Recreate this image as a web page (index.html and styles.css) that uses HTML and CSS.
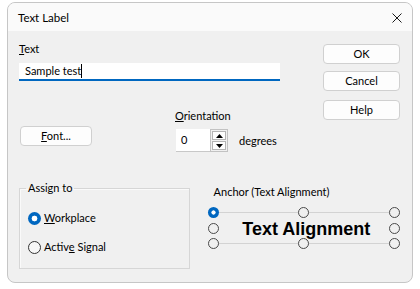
FILE: index.html
```html
<!DOCTYPE html>
<html lang="en">
<head>
  <meta charset="UTF-8" />
  <title>Text Label</title>
  <link rel="stylesheet" href="styles.css">
</head>
<body>
  <div class="window">
    <div class="titlebar">
      <span class="title">Text Label</span>
      <svg class="close" width="10" height="10" viewBox="0 0 10 10">
        <path d="M0.5 0.5 L9.5 9.5 M9.5 0.5 L0.5 9.5" stroke="#1a1a1a" stroke-width="1" fill="none"/>
      </svg>
    </div>

    <div class="body">
      <div class="top">
        <div class="left">
          <div class="field-label"><u>T</u>ext</div>
          <div class="text-input">Sample test<span class="caret"></span></div>

          <div class="row2">
            <button class="btn btn-font"><u>F</u>ont...</button>
            <div class="orient">
              <div class="field-label"><u>O</u>rientation</div>
              <div class="spin-row">
                <div class="spin-input">0</div>
                <div class="spinner">
                  <div class="spin-btn">
                    <svg width="7" height="4" viewBox="0 0 7 4"><polygon points="3.5,0 7,4 0,4" fill="#000"/></svg>
                  </div>
                  <div class="spin-btn">
                    <svg width="7" height="4" viewBox="0 0 7 4"><polygon points="0,0 7,0 3.5,4" fill="#000"/></svg>
                  </div>
                </div>
                <span class="unit">degrees</span>
              </div>
            </div>
          </div>
        </div>

        <div class="right">
          <button class="btn btn-ok">OK</button>
          <button class="btn btn-cancel">Cancel</button>
          <button class="btn btn-help">Help</button>
        </div>
      </div>

      <div class="bottom">
        <fieldset class="group">
          <legend>Assign to</legend>
          <div class="radio-row first">
            <span class="radio checked"></span>
            <span><u>W</u>orkplace</span>
          </div>
          <div class="radio-row">
            <span class="radio"></span>
            <span>Activ<u>e</u> Signal</span>
          </div>
        </fieldset>

        <div class="anchor">
          <div class="anchor-label">Anchor (Text Alignment)</div>
          <div class="anchor-grid">
            <div class="a-row lined">
              <span class="dot checked"></span>
              <span class="dot"></span>
              <span class="dot"></span>
            </div>
            <div class="a-row middle">
              <span class="dot"></span>
              <span class="sample">Text Alignment</span>
              <span class="dot"></span>
            </div>
            <div class="a-row lined last">
              <span class="dot"></span>
              <span class="dot"></span>
              <span class="dot"></span>
            </div>
          </div>
        </div>
      </div>
    </div>
  </div>
</body>
</html>
```

FILE: styles.css
```css
body {
  margin: 0;
  background: #ffffff;
  font-family: Lato, "Noto Sans", sans-serif;
  font-size: 11px;
  color: #000;
}

.window {
  box-sizing: border-box;
  margin: 2px 0 0 7px;
  width: 406px;
  height: 281px;
  border: 1px solid #c6c6c6;
  border-radius: 8px;
  overflow: hidden;
  background: #f0f0f0;
  display: flex;
  flex-direction: column;
}

.titlebar {
  height: 28px;
  background: #fafafa;
  display: flex;
  align-items: center;
  justify-content: space-between;
  padding: 0 10px 0 10px;
}

.title {
  font-size: 11.5px;
  line-height: 16px;
  padding-top: 1px;
}

.close {
  display: block;
  margin-top: 1px;
}

.body {
  flex: 1;
  padding: 0 12px 0 11px;
}

.top {
  display: flex;
  justify-content: space-between;
  height: 150px;
}

.left {
  width: 261px;
  padding-top: 10px;
}

.field-label {
  line-height: 16px;
}

.text-input {
  box-sizing: border-box;
  margin-top: 6px;
  height: 18px;
  padding-left: 6px;
  background: #fff;
  border-bottom: 2px solid #0067c0;
  line-height: 16px;
  display: flex;
  align-items: center;
}

.caret {
  display: inline-block;
  width: 1px;
  height: 14px;
  background: #000;
}

.row2 {
  display: flex;
  align-items: flex-start;
  margin-top: 27px;
}

.btn {
  box-sizing: border-box;
  height: 20px;
  padding: 0;
  background: #fdfdfd;
  border: 1px solid #d0d0d0;
  border-radius: 4px;
  font-family: inherit;
  font-size: 11px;
  color: #000;
  line-height: 16px;
}

.btn-font {
  width: 72px;
  margin: 18px 0 0 1px;
}

.orient {
  margin-left: 83px;
}

.spin-row {
  display: flex;
  align-items: center;
  margin-top: 5px;
}

.spin-input {
  box-sizing: border-box;
  width: 34px;
  height: 23px;
  margin-left: 1px;
  padding-left: 5px;
  background: #fff;
  border-bottom: 1px solid #c8c8c8;
  line-height: 22px;
}

.spinner {
  box-sizing: border-box;
  width: 18px;
  height: 23px;
  border: 1px solid #c2c2c2;
  background: #f0f0f0;
  padding: 1px;
  display: flex;
  flex-direction: column;
  gap: 1px;
}

.spin-btn {
  flex: 1;
  background: #fdfdfd;
  border: 1px solid #b4b4b4;
  display: flex;
  align-items: center;
  justify-content: center;
}

.spin-btn svg {
  display: block;
}

.unit {
  margin-left: 11px;
}

.right {
  width: 77px;
  padding-top: 13px;
  display: flex;
  flex-direction: column;
}

.right .btn {
  width: 77px;
}

.btn-cancel {
  margin-top: 7px;
}

.btn-help {
  margin-top: 9px;
}

.bottom {
  display: flex;
}

.group {
  box-sizing: border-box;
  width: 172px;
  height: 88px;
  margin: 0;
  padding: 0;
  border: 1px solid #d6d6d6;
  box-shadow: inset 1px 1px 0 #fafafa;
}

.group legend {
  margin-left: 6px;
  padding: 0 2px;
  line-height: 14px;
}

.radio-row {
  display: flex;
  align-items: center;
  gap: 3px;
  margin: 13px 0 0 8px;
  line-height: 16px;
}

.radio-row.first {
  margin-top: 15px;
}

.radio {
  box-sizing: border-box;
  width: 13px;
  height: 13px;
  border-radius: 50%;
  border: 1px solid #333;
  background: #f7f7f7;
}

.radio.checked {
  border: none;
  background: radial-gradient(circle, #fff 0 2.6px, #0067c0 3.2px);
}

.anchor {
  width: 194px;
  margin-left: 18px;
}

.anchor-label {
  padding-left: 6px;
  margin-top: 3px;
  line-height: 16px;
}

.anchor-grid {
  margin-top: 7px;
}

.a-row {
  display: flex;
  justify-content: space-between;
  align-items: center;
  height: 11px;
}

.a-row.lined {
  background: linear-gradient(#d3d3d3, #d3d3d3) center / 100% 1px no-repeat;
}

.a-row.middle {
  margin: 5px 0 4px 0;
}

.dot {
  box-sizing: border-box;
  width: 11px;
  height: 11px;
  border-radius: 50%;
  border: 1px solid #4a4a4a;
  background: #f0f0f0;
}

.dot.checked {
  border: none;
  background: radial-gradient(circle, #fff 0 1.8px, #0067c0 2.4px);
}

.sample {
  align-self: flex-start;
  padding-left: 5px;
  font-family: "Liberation Sans", Arial, sans-serif;
  font-weight: bold;
  font-size: 18px;
  line-height: 13px;
  color: #000;
}
```
